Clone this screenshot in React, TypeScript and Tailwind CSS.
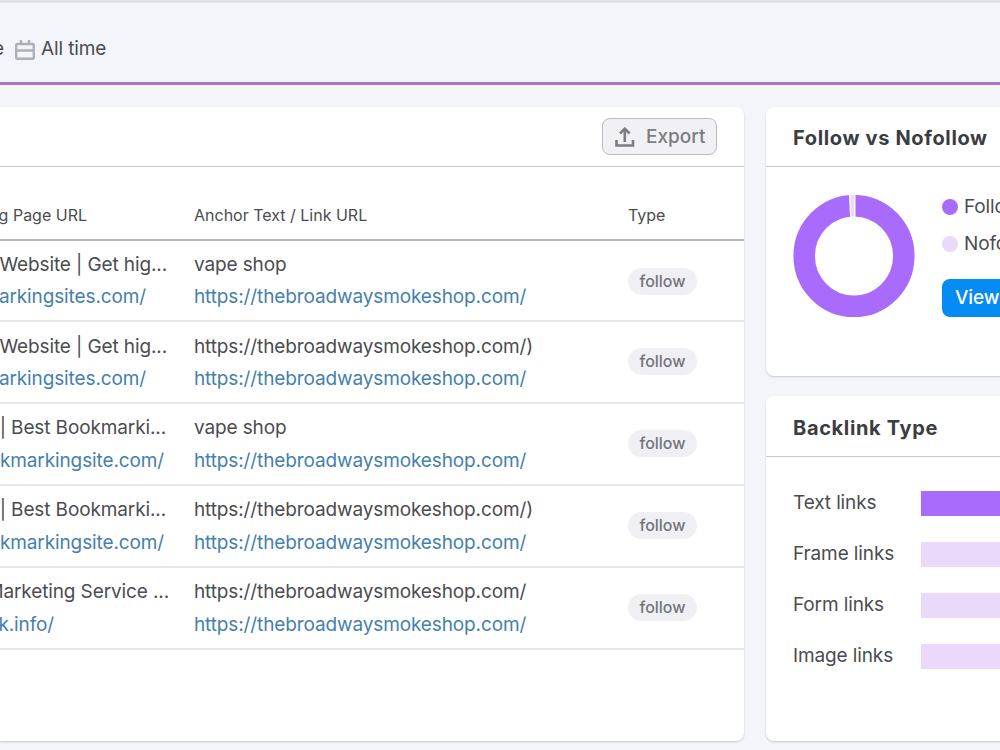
const rows = [
	{ title: "Website | Get hig...", titleEnd: 167, url: "arkingsites.com/", urlEnd: 146, anchor: "vape shop", height: "h-[81px]", textBox: "pt-[12px] gap-[8px]", tag: "mt-[27px]" },
	{ title: "Website | Get hig...", titleEnd: 167, url: "arkingsites.com/", urlEnd: 146, anchor: "https://thebroadwaysmokeshop.com/)", height: "h-[82px]", textBox: "pt-[13px] gap-[8px]", tag: "mt-[26px]" },
	{ title: "| Best Bookmarki...", titleEnd: 166, url: "okmarkingsite.com/", urlEnd: 164, anchor: "vape shop", height: "h-[82px]", textBox: "pt-[12px] gap-[9px]", tag: "mt-[26px]" },
	{ title: "| Best Bookmarki...", titleEnd: 166, url: "okmarkingsite.com/", urlEnd: 164, anchor: "https://thebroadwaysmokeshop.com/)", height: "h-[82px]", textBox: "pt-[12px] gap-[9px]", tag: "mt-[26px]" },
	{ title: "Marketing Service ...", titleEnd: 169, url: "k.info/", urlEnd: 54, anchor: "https://thebroadwaysmokeshop.com/", height: "h-[82px]", textBox: "pt-[12px] gap-[9px]", tag: "mt-[26px]" },
];

const linkTypes = [
	{ label: "Text links", color: "bg-[#a96bfb]" },
	{ label: "Frame links", color: "bg-[#ead9fb]" },
	{ label: "Form links", color: "bg-[#ead9fb]" },
	{ label: "Image links", color: "bg-[#ead9fb]" },
];

export default function App() {
	return (
		<main className="flex h-[750px] w-[1000px] flex-col overflow-hidden bg-[#f4f5fa] font-['Inter','Liberation_Sans',sans-serif] text-[19px] tracking-[-0.12px] text-[#4b4c51]">
			<header className="flex h-[85px] shrink-0 items-center border-t-[3px] border-b-[3px] border-t-[#dfe1e6] border-b-[#a57abc] pt-[13px]">
				<Clipped text="e" end={4} />
				<CalendarIcon />
				<span className="mb-px ml-[6px] leading-6">All time</span>
			</header>

			<div className="mt-[22px] flex gap-[22px]">
				<section className="h-[634px] w-[744px] shrink-0 rounded-r-lg bg-white shadow-[0_1px_2px_rgba(30,35,60,0.22)]">
					<div className="flex h-[60px] items-center justify-end border-b-[1.5px] border-[#c9cacd] pr-[27px]">
						<button className="flex h-[37px] w-[115px] items-center rounded-lg border border-[#b9bac0] bg-[#f1f1f5] pl-[12px] text-[#7b7c84]">
							<ExportIcon />
							<span className="ml-[11px] font-medium leading-6 tracking-normal">Export</span>
						</button>
					</div>
					<div className="flex h-[74px] items-end border-b-2 border-[#b9babc] pb-[12px] text-base leading-6 tracking-normal">
						<div className="w-[194px]">
							<Clipped text="g Page URL" end={87} />
						</div>
						<div className="w-[434px]">Anchor Text / Link URL</div>
						<div>Type</div>
					</div>
					{rows.map((row, idx) => (
						<Row key={idx} row={row} />
					))}
				</section>

				<div className="flex w-[400px] shrink-0 flex-col gap-[20px]">
					<section className="h-[269px] rounded-lg bg-white shadow-[0_1px_2px_rgba(30,35,60,0.22)]">
						<CardTitle>Follow vs Nofollow</CardTitle>
						<div className="flex pt-[27px] pl-[27px]">
							<Donut />
							<div className="ml-[27px] whitespace-nowrap">
								<div className="flex h-[26px] items-center">
									<span className="mr-[6px] size-4 rounded-full bg-[#a96bfb]" />
									Follow
								</div>
								<div className="mt-[11px] flex h-[26px] items-center">
									<span className="mr-[6px] size-4 rounded-full bg-[#ead9fb]" />
									Nofollow
								</div>
								<button className="mt-[22px] flex h-[38px] w-[170px] items-center rounded-lg bg-[#058cf2] pl-[13px] font-medium text-white">
									View details
								</button>
							</div>
						</div>
					</section>

					<section className="h-[345px] rounded-lg bg-white pt-px shadow-[0_1px_2px_rgba(30,35,60,0.22)]">
						<CardTitle>Backlink Type</CardTitle>
						<div className="flex flex-col gap-[26px] pt-[34px] pl-[27px]">
							{linkTypes.map((type) => (
								<div key={type.label} className="flex h-[25px] items-center">
									<span className="w-[128px] whitespace-nowrap">{type.label}</span>
									<span className={`h-[25px] flex-1 ${type.color}`} />
								</div>
							))}
						</div>
					</section>
				</div>
			</div>
		</main>
	);
}

const Row = ({ row }: { row: (typeof rows)[number] }) => {
	return (
		<div className={`flex border-b-2 border-[#e6e7e9] leading-6 whitespace-nowrap ${row.height}`}>
			<div className={`flex w-[194px] flex-col ${row.textBox}`}>
				<Clipped text={row.title} end={row.titleEnd} />
				<div className="text-[#4580ad]">
					<Clipped text={row.url} end={row.urlEnd} />
				</div>
			</div>
			<div className={`flex w-[434px] flex-col ${row.textBox}`}>
				<div>{row.anchor}</div>
				<div className="text-[#4580ad]">https://thebroadwaysmokeshop.com/</div>
			</div>
			<div className={`flex h-[27px] w-[69px] items-center justify-center rounded-full bg-[#f0f0f4] pb-[2px] text-base font-medium tracking-normal text-[#73757d] ${row.tag}`}>
				follow
			</div>
		</div>
	);
};

// Text scrolled past the left edge, only its tail stays visible
const Clipped = ({ text, end }: { text: string; end: number }) => {
	return (
		<div className="flex justify-end overflow-hidden leading-6 whitespace-nowrap" style={{ width: end }}>
			<span>{text}</span>
		</div>
	);
};

const CardTitle = ({ children }: { children: string }) => {
	return (
		<h2 className="flex h-[60px] items-center border-b-[1.5px] border-[#c9cacd] pt-[2px] pl-[27px] text-xl font-bold tracking-[0.65px] whitespace-nowrap text-[#3b3d43]">
			{children}
		</h2>
	);
};

const CalendarIcon = () => {
	return (
		<svg className="mt-[2px] ml-[11px] shrink-0" width="20" height="20" viewBox="0 0 20 20" fill="none" stroke="#aeb0b7" strokeWidth="2.4">
			<rect x="1.2" y="4" width="17.6" height="14.8" rx="1" />
			<path d="M1 10.5h18M6 0v5M14 0v5" />
		</svg>
	);
};

const ExportIcon = () => {
	return (
		<svg width="20" height="20" viewBox="0 0 20 20" fill="none" stroke="currentColor" strokeWidth="2.6">
			<path d="M1.5 13v5.5h16.5V13M9.8 15V2M5 6.5l4.8-4.8 4.8 4.8" />
		</svg>
	);
};

const Donut = () => {
	return (
		<svg width="122" height="124" viewBox="0 0 122 124">
			<ellipse cx="61" cy="62" rx="49.8" ry="50.3" fill="none" stroke="#a96bfb" strokeWidth="21.5" />
			<path d="M56 0h6.5v23H57z" fill="#fff" />
			<path d="M57.6 1h3.6v21.5h-3z" fill="#ead9fb" />
		</svg>
	);
};
